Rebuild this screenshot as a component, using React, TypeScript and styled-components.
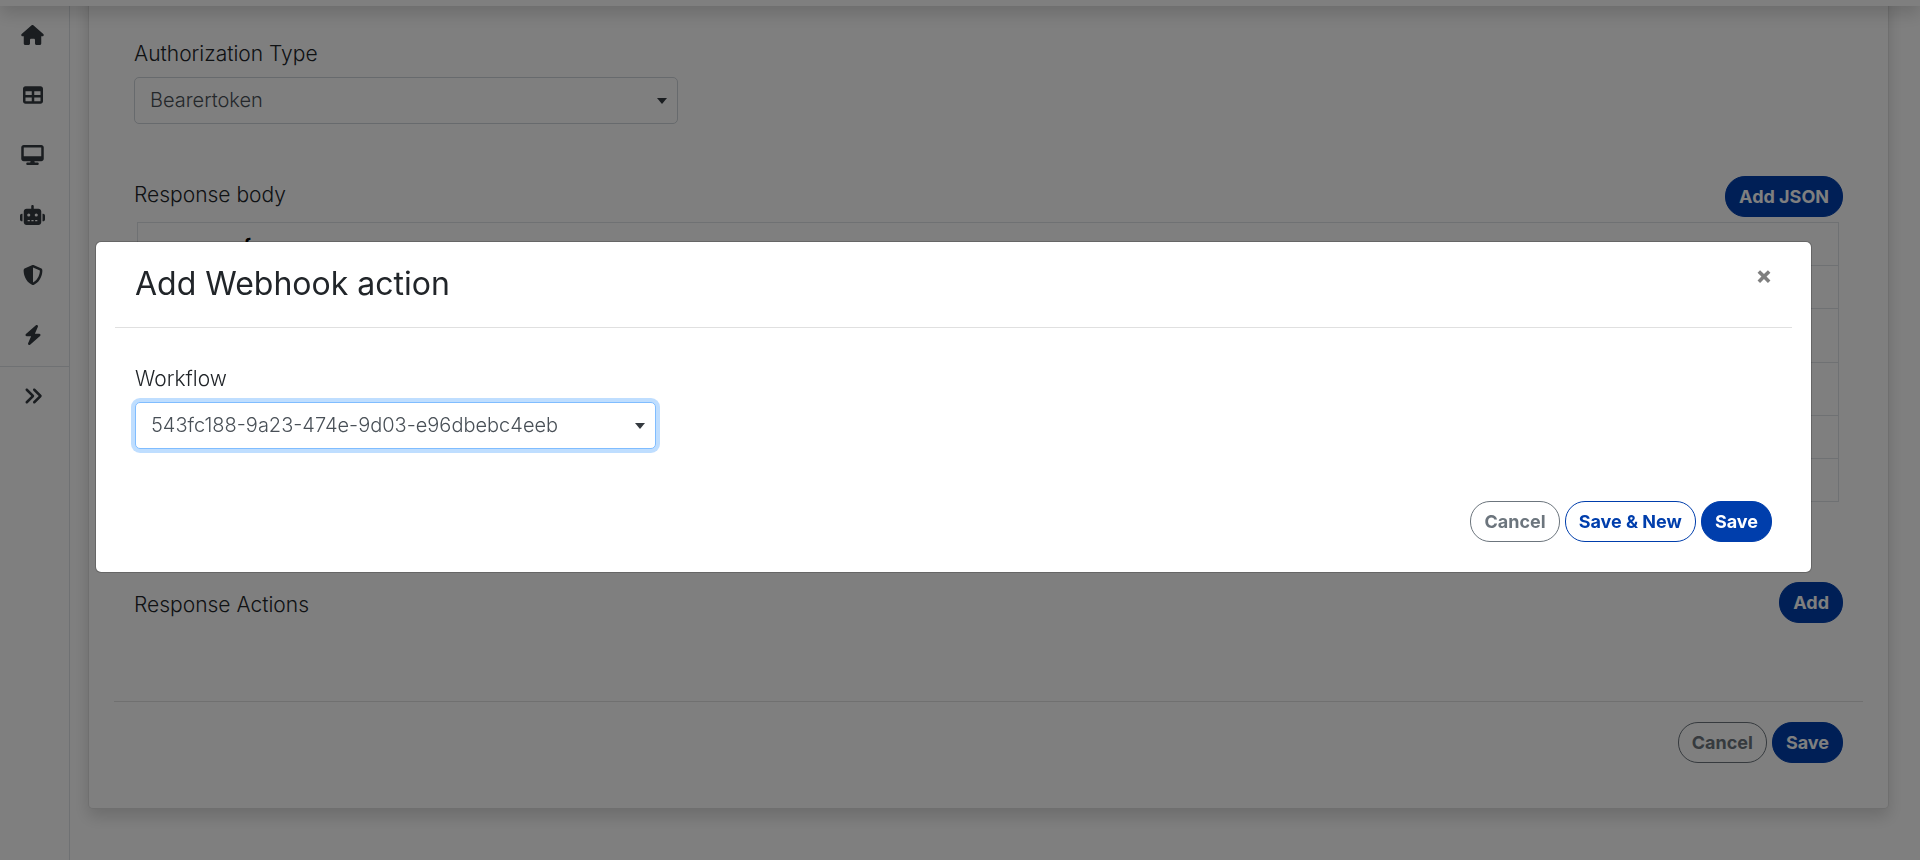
import React from "react";
import styled, { createGlobalStyle } from "styled-components";
import { FaHouse, FaTable, FaDesktop, FaRobot, FaShieldHalved, FaBolt, FaAnglesRight } from "react-icons/fa6";

const GlobalStyle = createGlobalStyle`
  *, *::before, *::after { box-sizing: border-box; }
  body {
    margin: 0;
    background: #fff;
    color: #212529;
    font-family: Inter, "Open Sans", sans-serif;
    font-weight: 300;
    font-size: 20px;
    line-height: 30px;
  }
`;

const Page = styled.div`
  display: flex;
  min-height: 100vh;
  overflow: hidden;
`;

/* The bar is mostly scrolled out of view; only its lower edge and shadow show. */
const TopBar = styled.header`
  position: fixed;
  top: -74px;
  left: 0;
  right: 0;
  height: 80px;
  background: #fff;
  box-shadow: 0 8px 16px rgba(0, 0, 0, 0.15);
  z-index: 2;
`;

const Sidebar = styled.nav`
  flex: none;
  width: 70px;
  padding-top: 6px;
  border-right: 1px solid #dee2e6;
`;

const NavLink = styled.a<{ $iconWidth: number }>`
  display: flex;
  align-items: center;
  justify-content: center;
  height: 60px;
  padding: 0 4px 2px 0;
  color: #343a40;
  svg {
    width: ${(p) => p.$iconWidth}px;
    height: 20px;
  }
`;

const NavExpand = styled.button`
  display: flex;
  align-items: center;
  justify-content: center;
  width: 100%;
  height: 60px;
  padding: 0 4px 2px 0;
  border: 0;
  border-top: 1px solid #dee2e6;
  background: none;
  color: #343a40;
  font-size: 20px;
`;

const Main = styled.main`
  flex: 1;
  margin-top: -40px;
  padding: 0 31px 50px 18px;
`;

const Card = styled.section`
  padding: 79px 25px 45px;
  border: 1px solid rgba(0, 0, 0, 0.125);
  border-top: 0;
  border-radius: 0 0 5px 5px;
  box-shadow: 0 8px 16px rgba(0, 0, 0, 0.15);
`;

const Inner = styled.div`
  padding: 0 20px;
`;

const Label = styled.label`
  display: block;
  margin-bottom: 8px;
  font-size: 21px;
`;

const SelectWrap = styled.div<{ $width: number }>`
  position: relative;
  max-width: ${(p) => p.$width}px;
  &::after {
    content: "";
    position: absolute;
    top: 21px;
    right: 11px;
    border: 5px solid transparent;
    border-top: 6px solid #343a40;
    border-bottom: 0;
  }
`;

const Select = styled.select`
  display: block;
  width: 100%;
  height: 47px;
  padding: 0 32px 2px 15px;
  appearance: none;
  border: 1px solid #ced4da;
  border-radius: 5px;
  background: #fff;
  color: #495057;
  font: inherit;
  outline: 0;
  &:focus {
    border-color: #80bdff;
    box-shadow: 0 0 0 4px rgba(0, 123, 255, 0.25);
  }
`;

const SectionHead = styled.div<{ $top: number; $align: "flex-start" | "flex-end" }>`
  display: flex;
  align-items: ${(p) => p.$align};
  justify-content: space-between;
  margin-top: ${(p) => p.$top}px;
`;

const SectionTitle = styled.h2`
  margin: 0;
  font-size: 21px;
  font-weight: 300;
  line-height: 37px;
`;

const Button = styled.button<{ $tone?: "primary" | "outline" | "muted" }>`
  height: 41px;
  padding: 0 13px;
  border: 1px solid ${(p) => (p.$tone === "muted" ? "#6c757d" : "#003eac")};
  border-radius: 20px;
  background: ${(p) => (p.$tone ? "transparent" : "#003eac")};
  color: ${(p) => (p.$tone === "muted" ? "#6c757d" : p.$tone ? "#003eac" : "#fff")};
  font-family: inherit;
  font-size: 18px;
  font-weight: 700;
  white-space: nowrap;
`;

const JsonTable = styled.table`
  width: calc(100% - 7px);
  margin: 5px 4px 0 3px;
  border-collapse: collapse;
`;

const JsonCell = styled.td<{ $height: number }>`
  height: ${(p) => p.$height}px;
  padding: 4px 104px 0;
  border: 1px solid #dee2e6;
  color: #000;
  font-weight: 700;
`;

const Rule = styled.hr`
  height: 1px;
  margin: 0;
  border: 0;
  background: rgba(0, 0, 0, 0.12);
`;

const Actions = styled.div`
  display: flex;
  justify-content: flex-end;
  gap: 5px;
  padding: 20px 20px 0;
`;

const Spacer = styled.div`
  height: 78px;
`;

const Backdrop = styled.div`
  position: fixed;
  inset: 0;
  padding: 241px 108px 0 95px;
  background: rgba(0, 0, 0, 0.5);
  z-index: 3;
`;

const Dialog = styled.div`
  padding: 0 19px 30px;
  border: 1px solid rgba(0, 0, 0, 0.2);
  border-radius: 6px;
  background: #fff;
  background-clip: padding-box;
`;

const DialogHead = styled.div`
  display: flex;
  align-items: flex-start;
  justify-content: space-between;
  height: 85px;
  padding: 20px 19px 0 20px;
`;

const DialogTitle = styled.h1`
  margin: 0;
  font-size: 32px;
  font-weight: 400;
  line-height: 44px;
`;

const Close = styled.button`
  width: 18px;
  padding: 0;
  border: 0;
  background: none;
  color: #7f7f7f;
  font-family: inherit;
  font-size: 24px;
  font-weight: 800;
  line-height: 28px;
`;

const DialogBody = styled.div`
  padding: 36px 20px 32px;
`;

const navItems = [
  { name: "Home", Icon: FaHouse, width: 23 },
  { name: "Tables", Icon: FaTable, width: 20 },
  { name: "Screens", Icon: FaDesktop, width: 23 },
  { name: "Bots", Icon: FaRobot, width: 25 },
  { name: "Security", Icon: FaShieldHalved, width: 20 },
  { name: "Actions", Icon: FaBolt, width: 20 },
];

const jsonRows = [
  { height: 43, text: "{" },
  { height: 43, text: "" },
  { height: 54, text: "" },
  { height: 53, text: "" },
  { height: 43, text: "" },
  { height: 43, text: "" },
];

export default function App() {
  return (
    <>
      <GlobalStyle />
      <TopBar />
      <Page>
        <Sidebar>
          {navItems.map(({ name, Icon, width }) => (
            <NavLink href="#" key={name} aria-label={name} $iconWidth={width}>
              <Icon />
            </NavLink>
          ))}
          <NavExpand aria-label="Expand menu">
            <FaAnglesRight />
          </NavExpand>
        </Sidebar>
        <Main>
          <Card>
            <Inner>
              <Label htmlFor="auth">Authorization Type</Label>
              <SelectWrap $width={544}>
                <Select id="auth">
                  <option>Bearertoken</option>
                </Select>
              </SelectWrap>
              <SectionHead $top={52} $align="flex-start">
                <SectionTitle>Response body</SectionTitle>
                <Button>Add JSON</Button>
              </SectionHead>
              <JsonTable>
                <tbody>
                  {jsonRows.map((row, i) => (
                    <tr key={i}>
                      <JsonCell $height={row.height}>{row.text}</JsonCell>
                    </tr>
                  ))}
                </tbody>
              </JsonTable>
              <SectionHead $top={80} $align="flex-end">
                <SectionTitle>Response Actions</SectionTitle>
                <Button>Add</Button>
              </SectionHead>
            </Inner>
            <Spacer />
            <Rule />
            <Actions>
              <Button $tone="muted">Cancel</Button>
              <Button>Save</Button>
            </Actions>
          </Card>
        </Main>
      </Page>
      <Backdrop>
        <Dialog role="dialog" aria-modal="true" aria-labelledby="dialog-title">
          <DialogHead>
            <DialogTitle id="dialog-title">Add Webhook action</DialogTitle>
            <Close aria-label="Close">×</Close>
          </DialogHead>
          <Rule />
          <DialogBody>
            <Label htmlFor="workflow">Workflow</Label>
            <SelectWrap $width={521}>
              <Select id="workflow" autoFocus>
                <option>543fc188-9a23-474e-9d03-e96dbebc4eeb</option>
              </Select>
            </SelectWrap>
          </DialogBody>
          <Actions>
            <Button $tone="muted">Cancel</Button>
            <Button $tone="outline">Save &amp; New</Button>
            <Button>Save</Button>
          </Actions>
        </Dialog>
      </Backdrop>
    </>
  );
}
